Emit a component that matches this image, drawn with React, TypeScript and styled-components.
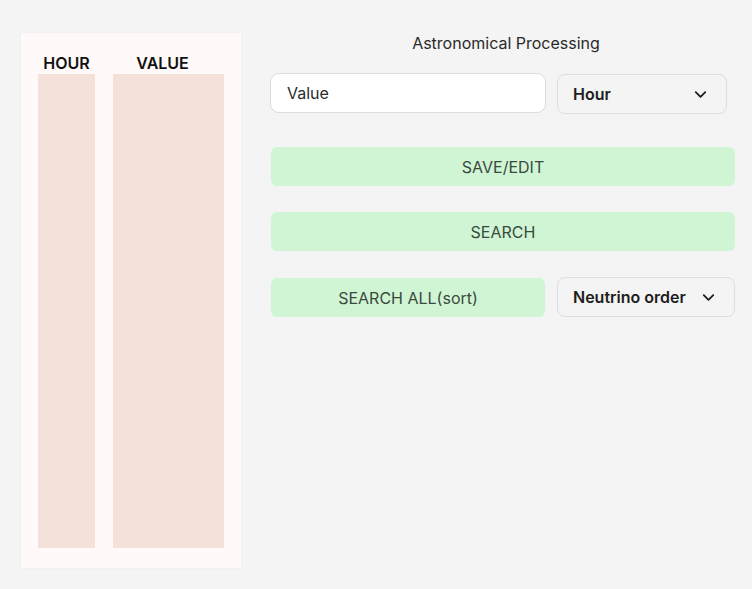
import React from "react";
import styled, { createGlobalStyle } from "styled-components";
import { ChevronDown } from "lucide-react";

const Global = createGlobalStyle`
  html, body { margin: 0; padding: 0; background: #f4f4f4; }
  body { font-family: Inter, "Noto Sans", sans-serif; color: #222; }
  * { box-sizing: border-box; }
`;

const Page = styled.div`
  display: flex;
  align-items: flex-start;
  padding: 33px 0 0 21px;
  width: 752px;
  height: 589px;
`;

const Panel = styled.div`
  width: 220px;
  height: 535px;
  background: #fffaf9;
  box-shadow: 0 0 3px rgba(0, 0, 0, 0.04);
  padding: 20px 17px 20px 17px;
  display: flex;
  gap: 18px;
`;

const Column = styled.div<{ $w: number }>`
  width: ${(p) => p.$w}px;
  display: flex;
  flex-direction: column;
`;

const ColHeader = styled.div<{ $shift?: number }>`
  font-size: 16px;
  font-weight: 600;
  line-height: 21px;
  height: 21px;
  text-align: center;
  color: #111;
  transform: translateX(${(p) => p.$shift ?? 0}px);
  white-space: nowrap;
`;

const ColBody = styled.div`
  flex: 1;
  background: #f3e1da;
`;

const Right = styled.div`
  margin-left: 29px;
  width: 465px;
  display: flex;
  flex-direction: column;
`;

const Title = styled.div`
  font-size: 16px;
  line-height: 20px;
  text-align: center;
  color: #2a2a2a;
  padding-left: 7px;
`;

const Row = styled.div<{ $top: number; $gap?: number }>`
  display: flex;
  align-items: center;
  gap: ${(p) => p.$gap ?? 11}px;
  margin-top: ${(p) => p.$top}px;
`;

const Input = styled.input`
  width: 276px;
  height: 40px;
  border: 1px solid #dcdcdc;
  border-radius: 9px;
  background: #fff;
  padding: 0 16px;
  font-family: Inter, "Noto Sans", sans-serif;
  font-size: 16px;
  color: #222;
  outline: none;
  &::placeholder { color: #2a2a2a; }
`;

const Select = styled.div<{ $w: number; $dy?: number }>`
  width: ${(p) => p.$w}px;
  height: 40px;
  border: 1px solid #dedede;
  border-radius: 8px;
  background: #f4f4f4;
  display: flex;
  align-items: center;
  justify-content: space-between;
  padding: 0 16px 0 15px;
  font-size: 16px;
  font-weight: 600;
  color: #1d1d1d;
  margin-top: ${(p) => p.$dy ?? 0}px;
`;

const Button = styled.button<{ $w?: number }>`
  width: ${(p) => (p.$w ? `${p.$w}px` : "464px")};
  margin-left: 1px;
  height: 39px;
  border: none;
  border-radius: 6px;
  background: #d0f5d5;
  font-family: Inter, "Noto Sans", sans-serif;
  font-size: 16px;
  color: #3a4a3d;
  display: flex;
  align-items: center;
  justify-content: center;
  padding: 0;
`;

export default function App() {
  return (
    <>
      <Global />
      <Page>
        <Panel>
          <Column $w={57}>
            <ColHeader>HOUR</ColHeader>
            <ColBody />
          </Column>
          <Column $w={111}>
            <ColHeader $shift={-6}>VALUE</ColHeader>
            <ColBody />
          </Column>
        </Panel>
        <Right>
          <Title>Astronomical Processing</Title>
          <Row $top={18}>
            <Input placeholder="Value" />
            <Select $w={170} $dy={3}>
              Hour
              <ChevronDown size={19} strokeWidth={2.3} />
            </Select>
          </Row>
          <Row $top={33}>
            <Button>SAVE/EDIT</Button>
          </Row>
          <Row $top={26}>
            <Button>SEARCH</Button>
          </Row>
          <Row $top={27} $gap={12}>
            <Button $w={274}>SEARCH ALL(sort)</Button>
            <Select $w={178} $dy={-1}>
              Neutrino order
              <ChevronDown size={19} strokeWidth={2.3} />
            </Select>
          </Row>
        </Right>
      </Page>
    </>
  );
}
